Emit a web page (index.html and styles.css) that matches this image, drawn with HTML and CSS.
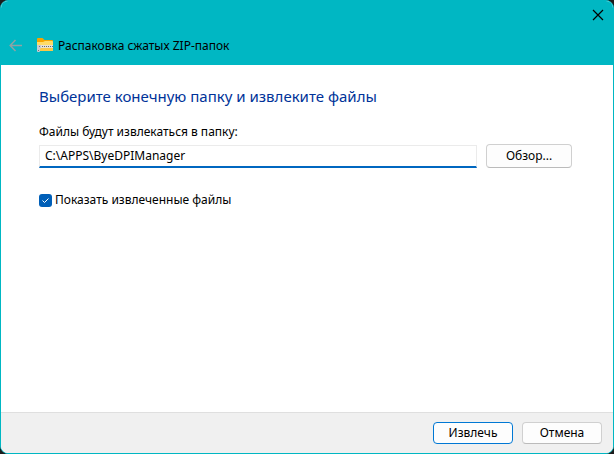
FILE: index.html
```html
<!DOCTYPE html>
<html lang="ru">
<head>
    <meta charset="UTF-8">
    <meta name="viewport" content="width=device-width, initial-scale=1.0">
    <title>Распаковка сжатых ZIP-папок</title>
    <link rel="stylesheet" href="styles.css">
</head>
<body>

    <form class="window">
        <header class="titlebar">
            <button type="button" class="close" aria-label="Закрыть">
                <svg width="12" height="12" viewBox="0 0 12 12"><path d="M1 1L11 11M11 1L1 11"/></svg>
            </button>
            <div class="caption">
                <button type="button" class="back" aria-label="Назад" disabled>
                    <svg width="14" height="14" viewBox="0 0 14 14"><path d="M14 6.500H2.500M7.500 1L2.200 6.500L7.500 12"/></svg>
                </button>
                <svg class="zip-icon" width="18" height="16" viewBox="0 0 18 16">
                    <path d="M1 1Q1 0 2 0H6.500L8.500 2H16Q17 2 17 3V7H1Z" fill="#f5a400"/>
                    <path d="M1 4H7L9 3H16Q17 3 17 4V12Q17 13 16 13H2Q1 13 1 12Z" fill="#ffdb68"/>
                    <path d="M1 10H17V12Q17 13 16 13H2Q1 13 1 12Z" fill="#fac848"/>
                    <path d="M1 7H17V10H1Z" fill="#e6e2d5"/>
                    <path d="M4 8.500H17" stroke="#66696e" stroke-width="1" stroke-dasharray="1 1"/>
                    <path d="M1 7H5V10L4 11V13Q4 14 3 14H2Q1 14 1 13V11Z" fill="#c9ccd2"/>
                    <path d="M2 12.500H3M3 8.500H4" stroke="#74777d"/>
                </svg>
                <h1>Распаковка сжатых ZIP-папок</h1>
            </div>
        </header>

        <main class="content">
            <h2>Выберите конечную папку и извлеките файлы</h2>
            <label class="path-label" for="path">Файлы будут извлекаться в папку:</label>
            <div class="path-row">
                <input type="text" id="path" value="C:\APPS\ByeDPIManager" spellcheck="false">
                <button type="button" class="browse">Обзор...</button>
            </div>
            <div class="check-row">
                <span class="check">
                    <input type="checkbox" id="show" checked>
                    <svg width="13" height="13" viewBox="0 0 13 13"><path d="M3.500 6.500L5.500 8.500L9.500 4.500"/></svg>
                </span>
                <label for="show">Показать извлеченные файлы</label>
            </div>
        </main>

        <footer class="footer">
            <button type="submit" class="primary">Извлечь</button>
            <button type="button">Отмена</button>
        </footer>
    </form>

</body>
</html>
```

FILE: styles.css
```css
* {
    box-sizing: border-box;
}
body {
    margin: 0;
    background: #1c1c1c;
    font-family: "Noto Sans", "Open Sans", sans-serif;
    font-size: 12px;
    line-height: 16px;
    color: #000;
}
button, input {
    font: inherit;
    color: inherit;
    margin: 0;
}
.window {
    display: flex;
    flex-direction: column;
    min-height: 100vh;
    border: 1px solid #00b7c3;
    border-radius: 8px;
    overflow: hidden;
    background: #fff;
}
.titlebar {
    background: #00b7c3;
}
.close, .back {
    display: flex;
    padding: 0;
    border: 0;
    background: none;
}
.close {
    margin-left: auto;
    padding: 8px 9px;
}
.close svg {
    stroke: #000;
    stroke-width: 1.2;
}
.back svg {
    fill: none;
    stroke: #8fa3a5;
    stroke-width: 1.5;
}
.caption {
    display: flex;
    align-items: center;
    height: 36px;
    padding: 0 7px 2px;
}
.zip-icon {
    margin: 0 4px 0 14px;
}
h1 {
    margin: 0;
    font-size: 12px;
    font-weight: normal;
}
.content {
    flex: 1;
    padding: 21px 41px 20px 38px;
}
h2 {
    margin: 0 0 18px;
    font-size: 15px;
    font-weight: normal;
    line-height: 20px;
    color: #003399;
}
.path-label {
    display: block;
    margin-bottom: 4px;
}
.path-row {
    display: flex;
    align-items: center;
    gap: 9px;
}
input[type="text"] {
    flex: 1;
    min-width: 0;
    height: 23px;
    padding: 0 5px;
    border: 1px solid #ebebeb;
    border-bottom: 2px solid #0067c0;
    outline: none;
}
.browse, .footer button {
    padding: 0;
    border: 1px solid #d0d0d0;
    border-bottom-color: #bbb;
    border-radius: 4px;
    background: #fdfdfd;
}
.browse {
    width: 86px;
    height: 24px;
}
.check-row {
    display: flex;
    align-items: center;
    gap: 3px;
    margin-top: 24px;
}
.check {
    display: grid;
}
.check input, .check svg {
    grid-area: 1 / 1;
}
.check input {
    width: 13px;
    height: 13px;
    appearance: none;
    border-radius: 3px;
    background: #005fb8;
}
.check svg {
    fill: none;
    stroke: #fff;
    pointer-events: none;
}
.footer {
    display: flex;
    justify-content: flex-end;
    gap: 9px;
    padding: 9px 11px;
    border-top: 1px solid #dfdfdf;
    background: #f0f0f0;
}
.footer button {
    width: 80px;
    height: 22px;
}
.footer .primary {
    border-color: #0078d4;
}
```
